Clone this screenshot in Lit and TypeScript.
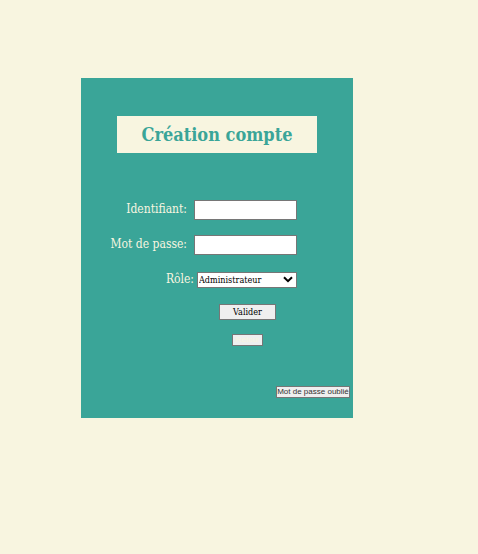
import { LitElement, html, css } from "lit";
import { customElement } from "lit/decorators.js";

@customElement("app-root")
export class AppRoot extends LitElement {
  static styles = css`
    :host {
      display: block;
      box-sizing: border-box;
      min-height: 100vh;
      padding: 78px 125px 78px 81px;
      background: #f8f5e0;
      font-family: "DejaVu Serif Condensed", "DejaVu Serif", serif;
      font-stretch: condensed;
      font-size: 12px;
    }
    .card {
      display: flex;
      flex-direction: column;
      padding: 38px 0 20px;
      background: #3aa598;
      color: #f8f5e0;
    }
    .title {
      margin: 0 36px;
      background: #f8f5e0;
      color: #3aa598;
      font-size: 18px;
      line-height: 37px;
      text-align: center;
      white-space: nowrap;
    }
    .form {
      display: flex;
      flex-direction: column;
      gap: 15px;
      margin: 47px 56px 0 0;
    }
    .row {
      display: flex;
      justify-content: flex-end;
      align-items: center;
      gap: 7px;
      height: 20px;
      white-space: nowrap;
    }
    .row.role {
      gap: 3px;
      height: 19px;
    }
    label {
      line-height: 18px;
      align-self: flex-start;
    }
    input,
    select,
    button {
      box-sizing: border-box;
      margin: 0;
      border: 1px solid #767676;
      border-radius: 0;
      font-family: inherit;
      font-stretch: inherit;
      color: #000;
    }
    input {
      width: 103px;
      height: 20px;
      padding: 1px 2px;
      background: #fff;
      font-size: 12px;
    }
    .select {
      display: grid;
      width: 100px;
      height: 16px;
    }
    select {
      grid-area: 1 / 1;
      appearance: none;
      padding: 0 16px 0 1px;
      background: #fff;
      font-size: 9px;
    }
    .chevron {
      grid-area: 1 / 1;
      place-self: center end;
      width: 10px;
      height: 7px;
      margin-right: 4px;
      pointer-events: none;
    }
    button {
      padding: 0;
      background: #efefef;
      white-space: nowrap;
    }
    .actions {
      display: flex;
      flex-direction: column;
      align-items: center;
      gap: 14px;
      width: 99px;
      margin-left: auto;
    }
    .submit {
      width: 57px;
      height: 16px;
      font-size: 9px;
      line-height: 14px;
    }
    .back,
    .forgot {
      height: 12px;
      font-family: "Liberation Sans", Arial, sans-serif;
      font-size: 8px;
      line-height: 10px;
    }
    .back {
      width: 31px;
      color: #f8f5e0;
    }
    .forgot {
      align-self: flex-end;
      width: 74px;
      margin: 40px 3px 0 0;
      color: #333;
    }
  `;

  render() {
    return html`
      <main class="card">
        <h1 class="title">Création compte</h1>
        <form class="form" @submit=${(e: Event) => e.preventDefault()}>
          <div class="row">
            <label for="login">Identifiant:</label>
            <input id="login" type="text" />
          </div>
          <div class="row">
            <label for="password">Mot de passe:</label>
            <input id="password" type="password" />
          </div>
          <div class="row role">
            <label for="role">Rôle:</label>
            <span class="select">
              <select id="role">
                <option>Administrateur</option>
              </select>
              <svg class="chevron" viewBox="0 0 10 7" aria-hidden="true">
                <path d="M1 1.2 5 5.2 9 1.2" fill="none" stroke="#000" stroke-width="2" />
              </svg>
            </span>
          </div>
          <div class="actions">
            <button class="submit" type="submit">Valider</button>
            <button class="back" type="button">Retour</button>
          </div>
        </form>
        <button class="forgot" type="button">Mot de passe oublié</button>
      </main>
    `;
  }
}
